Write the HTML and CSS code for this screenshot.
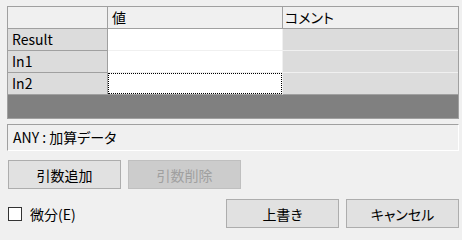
FILE: index.html
```html
<!DOCTYPE html>
<html lang="ja">
<head>
<meta charset="utf-8">
<link rel="stylesheet" href="styles.css">
</head>
<body>
<div class="dlg">
  <div class="grid">
    <div class="hdr corner"></div>
    <div class="hdr hval">値</div>
    <div class="hdr hcmt">コメント</div>

    <div class="rh">Result</div>
    <div class="val"></div>
    <div class="cmt"></div>

    <div class="rh">In1</div>
    <div class="val"></div>
    <div class="cmt"></div>

    <div class="rh last">In2</div>
    <div class="val last"><div class="focus"></div></div>
    <div class="cmt last"></div>

    <div class="empty"></div>
  </div>

  <div class="status">ANY : 加算データ</div>

  <div class="row1">
    <button class="btn">引数追加</button>
    <button class="btn" disabled>引数削除</button>
  </div>

  <div class="row2">
    <label class="chk"><span class="box"></span><span>微分(E)</span></label>
    <div class="actions">
      <button class="btn">上書き</button>
      <button class="btn">キャンセル</button>
    </div>
  </div>
</div>
</body>
</html>
```

FILE: styles.css
```css
* { box-sizing: border-box; }
html, body {
  margin: 0;
  padding: 0;
  background: #f0f0f0;
}
body {
  font-family: "Noto Sans CJK JP", "Noto Sans", sans-serif;
  font-size: 14px;
  font-feature-settings: "palt";
  color: #000;
  width: 462px;
  height: 232px;
  overflow: hidden;
}
.dlg {
  padding: 6px 0 0 7px;
  width: 459px;
}
.grid {
  display: grid;
  grid-template-columns: 100px 175px 175px;
  grid-template-rows: 22px 22px 22px 22px 23px;
  border: 1px solid #a0a0a0;
  width: 452px;
}
.hdr {
  background: #f0f0f0;
  border-bottom: 1px solid #a0a0a0;
  border-right: 1px solid #a0a0a0;
  padding-left: 4px;
  line-height: 20px;
}
.hdr.hcmt { border-right: none; padding-left: 2px; }
.rh {
  background: #dcdcdc;
  border-right: 1px solid #a0a0a0;
  border-bottom: 1px solid #a0a0a0;
  padding-left: 4px;
  line-height: 20px;
}
.val {
  background: #fff;
  border-right: 1px solid #f0f0f0;
  border-bottom: 1px solid #f0f0f0;
  position: relative;
}
.cmt {
  background: #dcdcdc;
  border-bottom: 1px solid #f0f0f0;
}
.last { border-bottom-color: #a0a0a0; }
.focus {
  position: absolute;
  left: 0;
  top: 0;
  right: 0;
  bottom: 0;
  border: 1px dotted #000;
}
.empty {
  grid-column: 1 / 4;
  background: #808080;
}
.status {
  margin-top: 5px;
  width: 452px;
  height: 27px;
  border-top: 1px solid #a0a0a0;
  border-left: 1px solid #a0a0a0;
  border-bottom: 1px solid #fff;
  border-right: 1px solid #fff;
  padding-left: 5px;
  line-height: 24px;
}
.btn {
  font: inherit;
  font-feature-settings: "palt";
  width: 113px;
  height: 29px;
  background: #e1e1e1;
  border: 1px solid #adadad;
  color: #000;
  padding: 0;
  margin: 0;
}
.btn:disabled {
  background: #cccccc;
  border-color: #bfbfbf;
  color: #a0a0a0;
}
.row1 {
  display: flex;
  gap: 7px;
  margin-top: 9px;
  padding-left: 1px;
}
.row2 {
  display: flex;
  align-items: center;
  justify-content: space-between;
  margin-top: 10px;
  width: 452px;
}
.chk {
  display: flex;
  align-items: center;
  gap: 8px;
  padding-left: 1px;
}
.box {
  width: 14px;
  height: 14px;
  background: #fff;
  border: 1px solid #333;
}
.actions {
  display: flex;
  gap: 7px;
}
```
